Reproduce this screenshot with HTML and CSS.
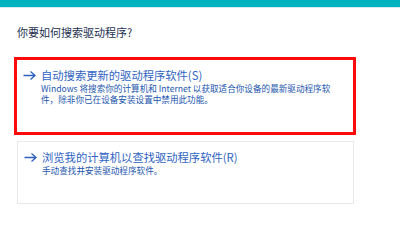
FILE: index.html
```html
<!DOCTYPE html>
<html lang="zh-CN">
<head>
<meta charset="utf-8">
<link rel="stylesheet" href="styles.css">
</head>
<body>
<div class="topbar"></div>
<div class="content">
  <h1 class="heading">你要如何搜索驱动程序?</h1>
  <div class="option option-selected">
    <div class="option-title">
      <svg class="arrow" width="13" height="9" viewBox="0 0 13 9"><path d="M0.5 4.5H12M7.5 0.5L12 4.5L7.5 8.5" fill="none" stroke="#2c5fbf" stroke-width="1.3"/></svg>
      <span>自动搜索更新的驱动程序软件(S)</span>
    </div>
    <p class="option-desc">Windows 将搜索你的计算机和 Internet 以获取适合你设备的最新驱动程序软件，除非你已在设备安装设置中禁用此功能。</p>
  </div>
  <div class="option option-plain">
    <div class="option-title">
      <svg class="arrow" width="13" height="9" viewBox="0 0 13 9"><path d="M0.5 4.5H12M7.5 0.5L12 4.5L7.5 8.5" fill="none" stroke="#2c5fbf" stroke-width="1.3"/></svg>
      <span>浏览我的计算机以查找驱动程序软件(R)</span>
    </div>
    <p class="option-desc">手动查找并安装驱动程序软件。</p>
  </div>
</div>
</body>
</html>
```
FILE: styles.css
```css
html, body {
  margin: 0;
  padding: 0;
  background: #ffffff;
  font-family: "Noto Sans CJK SC", "Noto Sans", sans-serif;
}
.topbar {
  height: 7px;
  background: #00b3bf;
  border-bottom: 1px solid #d6ecee;
}
.content {
  display: flex;
  flex-direction: column;
}
.heading {
  margin: 17px 0 0 17px;
  font-size: 11px;
  line-height: 14px;
  font-weight: normal;
  color: #1d3050;
}
.option {
  box-sizing: border-box;
  display: flex;
  flex-direction: column;
}
.option-selected {
  margin: 18px 0 0 14px;
  width: 342px;
  height: 78px;
  border: 3px solid #ff0a0a;
  padding: 9px 0 0 6px;
}
.option-plain {
  margin: 6px 0 0 17px;
  width: 337px;
  height: 63px;
  border: 1px solid #e9e9e9;
  padding: 9px 0 0 6px;
}
.option-title {
  display: flex;
  align-items: center;
  gap: 5px;
  font-size: 11.3px;
  line-height: 13.5px;
  color: #3064c2;
}
.arrow {
  flex: none;
}
.option-desc {
  margin: 0 0 0 18px;
  width: 296px;
  font-size: 8.6px;
  line-height: 11.5px;
  color: #2356ad;
}
```
